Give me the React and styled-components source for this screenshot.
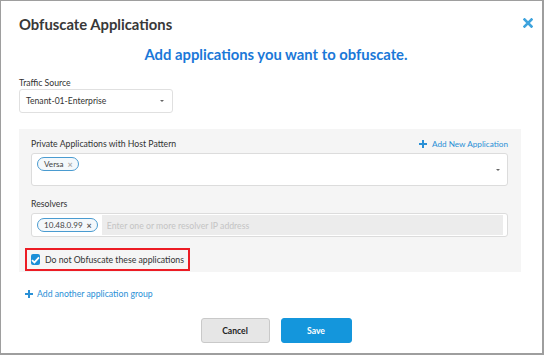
import styled, { createGlobalStyle } from "styled-components";

const GlobalStyle = createGlobalStyle`
  html, body {
    margin: 0;
    padding: 0;
    background: #fff;
  }
  * {
    box-sizing: border-box;
  }
`;

function App() {
  return (
    <>
      <GlobalStyle />
      <Modal>
        <Header>
          <Title>Obfuscate Applications</Title>
          <CloseBtn aria-label="close">
            <svg width="10" height="10" viewBox="0 0 10 10">
              <path d="M1.5 1.5 L8.5 8.5 M8.5 1.5 L1.5 8.5" stroke="#3ea3dd" strokeWidth="2.6" strokeLinecap="square" />
            </svg>
          </CloseBtn>
        </Header>
        <Subtitle>Add applications you want to obfuscate.</Subtitle>

        <Label>Traffic Source</Label>
        <Select>
          <span>Tenant-01-Enterprise</span>
          <Caret />
        </Select>

        <Panel>
          <LabelRow>
            <Label $inPanel>Private Applications with Host Pattern</Label>
            <LinkBtn>
              <Plus />
              Add New Application
            </LinkBtn>
          </LabelRow>
          <MultiBox>
            <Tag>
              Versa <TagX>×</TagX>
            </Tag>
            <Caret $floating />
          </MultiBox>

          <Label $inPanel $gap>Resolvers</Label>
          <ResolverBox>
            <Tag>
              10.48.0.99 <TagX $dark>×</TagX>
            </Tag>
            <ResolverInput placeholder="Enter one or more resolver IP address" />
          </ResolverBox>

          <Highlight>
            <Check>
              <svg width="9" height="8" viewBox="0 0 9 8">
                <path d="M1 4.2 L3.4 6.4 L8 1.4" stroke="#fff" strokeWidth="1.8" fill="none" />
              </svg>
            </Check>
            Do not Obfuscate these applications
          </Highlight>
        </Panel>

        <AddGroup>
          <Plus />
          Add another application group
        </AddGroup>

        <Footer>
          <Button>Cancel</Button>
          <Button $primary>Save</Button>
        </Footer>
      </Modal>
    </>
  );
}

export default App;

const Plus = () => (
  <svg width="8" height="8" viewBox="0 0 8 8">
    <path d="M4 0 V8 M0 4 H8" stroke="#2a90d6" strokeWidth="2" />
  </svg>
);

const Modal = styled.div`
  width: 544px;
  height: 355px;
  border: 1px solid #9e9e9e;
  border-right-width: 2px;
  border-bottom-width: 2px;
  padding: 0 21px 0 18px;
  display: flex;
  flex-direction: column;
  font-family: Lato, "Open Sans", sans-serif;
  color: #333;
  background: #fff;
`;

const Header = styled.div`
  display: flex;
  justify-content: space-between;
  align-items: flex-start;
  padding-top: 13px;
  margin-right: -12px;
`;

const Title = styled.h2`
  margin: 0;
  font-size: 14.8px;
  line-height: 20px;
  font-weight: 700;
  color: #383838;
`;

const CloseBtn = styled.button`
  border: none;
  background: none;
  padding: 0;
  margin-top: 4px;
  width: 10px;
  height: 10px;
  display: flex;
  cursor: pointer;
`;

const Subtitle = styled.h3`
  margin: 10px 0 0;
  text-align: center;
  font-size: 14.8px;
  line-height: 20px;
  font-weight: 700;
  color: #1a78d8;
  padding-left: 12px;
`;

const Label = styled.div`
  font-size: 8.7px;
  line-height: 11px;
  color: #333;
  margin-top: ${(p) => (p.$gap ? "12px" : p.$inPanel ? "0" : "13px")};
  margin-bottom: ${(p) => (p.$inPanel ? "4px" : "1px")};
`;

const Select = styled.div`
  width: 154px;
  height: 24px;
  border: 1px solid #e0e0e0;
  border-radius: 3px;
  display: flex;
  align-items: center;
  justify-content: space-between;
  padding: 0 8px 0 6px;
  font-size: 8.6px;
  color: #333;
`;

const Caret = styled.span`
  width: 0;
  height: 0;
  border-left: 2px solid transparent;
  border-right: 2px solid transparent;
  border-top: 2px solid #666;
  ${(p) => p.$floating && "position: absolute; right: 7px; top: 15px;"}
`;

const Panel = styled.div`
  margin-top: 16px;
  background: #f5f5f5;
  padding: 9px 13px 1px 12px;
  display: flex;
  flex-direction: column;
  align-items: flex-start;
`;

const LabelRow = styled.div`
  display: flex;
  justify-content: space-between;
  align-items: center;
  align-self: stretch;
  height: 11px;
  margin-bottom: 4px;

  & > div {
    margin-bottom: 0;
  }
`;

const LinkBtn = styled.button`
  border: none;
  background: none;
  padding: 0;
  display: flex;
  align-items: center;
  gap: 5px;
  font-family: inherit;
  font-size: 8.2px;
  color: #2a90d6;
  cursor: pointer;
`;

const MultiBox = styled.div`
  position: relative;
  align-self: stretch;
  height: 33px;
  background: #fff;
  border: 1px solid #dcdcdc;
  border-radius: 3px;
  padding: 3px 5px;
  display: flex;
  align-items: flex-start;
`;

const Tag = styled.span`
  display: inline-flex;
  align-items: center;
  gap: 4px;
  height: 14px;
  padding: 0 5px 0 6px;
  border: 1px solid #4a9bd0;
  border-radius: 7px;
  background: #f4f8fb;
  font-size: 8.1px;
  color: #444;
  white-space: nowrap;
`;

const TagX = styled.span`
  font-size: 9px;
  font-weight: 700;
  color: ${(p) => (p.$dark ? "#555" : "#aaa")};
`;

const ResolverBox = styled.div`
  align-self: stretch;
  height: 24px;
  background: #fff;
  border: 1px solid #dcdcdc;
  border-radius: 3px;
  padding: 1px 4px 1px 5px;
  display: flex;
  align-items: center;
  gap: 4px;
`;

const ResolverInput = styled.input`
  flex: 1;
  align-self: stretch;
  border: none;
  background: #ececec;
  outline: none;
  padding: 0 5px;
  font-family: inherit;
  font-size: 8.7px;
  color: #333;

  &::placeholder {
    color: #c4c4c4;
  }
`;

const Highlight = styled.div`
  margin: 11px 0 0 -6px;
  height: 23px;
  border: 2px solid #ec1c24;
  display: flex;
  align-items: center;
  gap: 5px;
  padding: 0 5px 0 4px;
  font-size: 8.7px;
  color: #333;
  width: 165px;
  white-space: nowrap;
`;

const Check = styled.span`
  width: 11px;
  height: 11px;
  border-radius: 2px;
  background: #1b8fd8;
  display: flex;
  align-items: center;
  justify-content: center;
`;

const AddGroup = styled.button`
  align-self: flex-start;
  margin: 16px 0 0 6px;
  border: none;
  background: none;
  padding: 0;
  display: flex;
  align-items: center;
  gap: 4px;
  font-family: inherit;
  font-size: 8.7px;
  color: #2a90d6;
  cursor: pointer;
`;

const Footer = styled.div`
  display: flex;
  justify-content: center;
  gap: 11px;
  margin-top: 19px;
  padding-left: 12px;
`;

const Button = styled.button`
  width: ${(p) => (p.$primary ? "71px" : "69px")};
  height: 25px;
  border-radius: 3px;
  border: 1px solid ${(p) => (p.$primary ? "#1496dc" : "#c9c9c9")};
  background: ${(p) => (p.$primary ? "#1496dc" : "#e6e6e6")};
  color: ${(p) => (p.$primary ? "#fff" : "#222")};
  font-family: inherit;
  font-size: 8.6px;
  font-weight: 700;
  cursor: pointer;
`;
